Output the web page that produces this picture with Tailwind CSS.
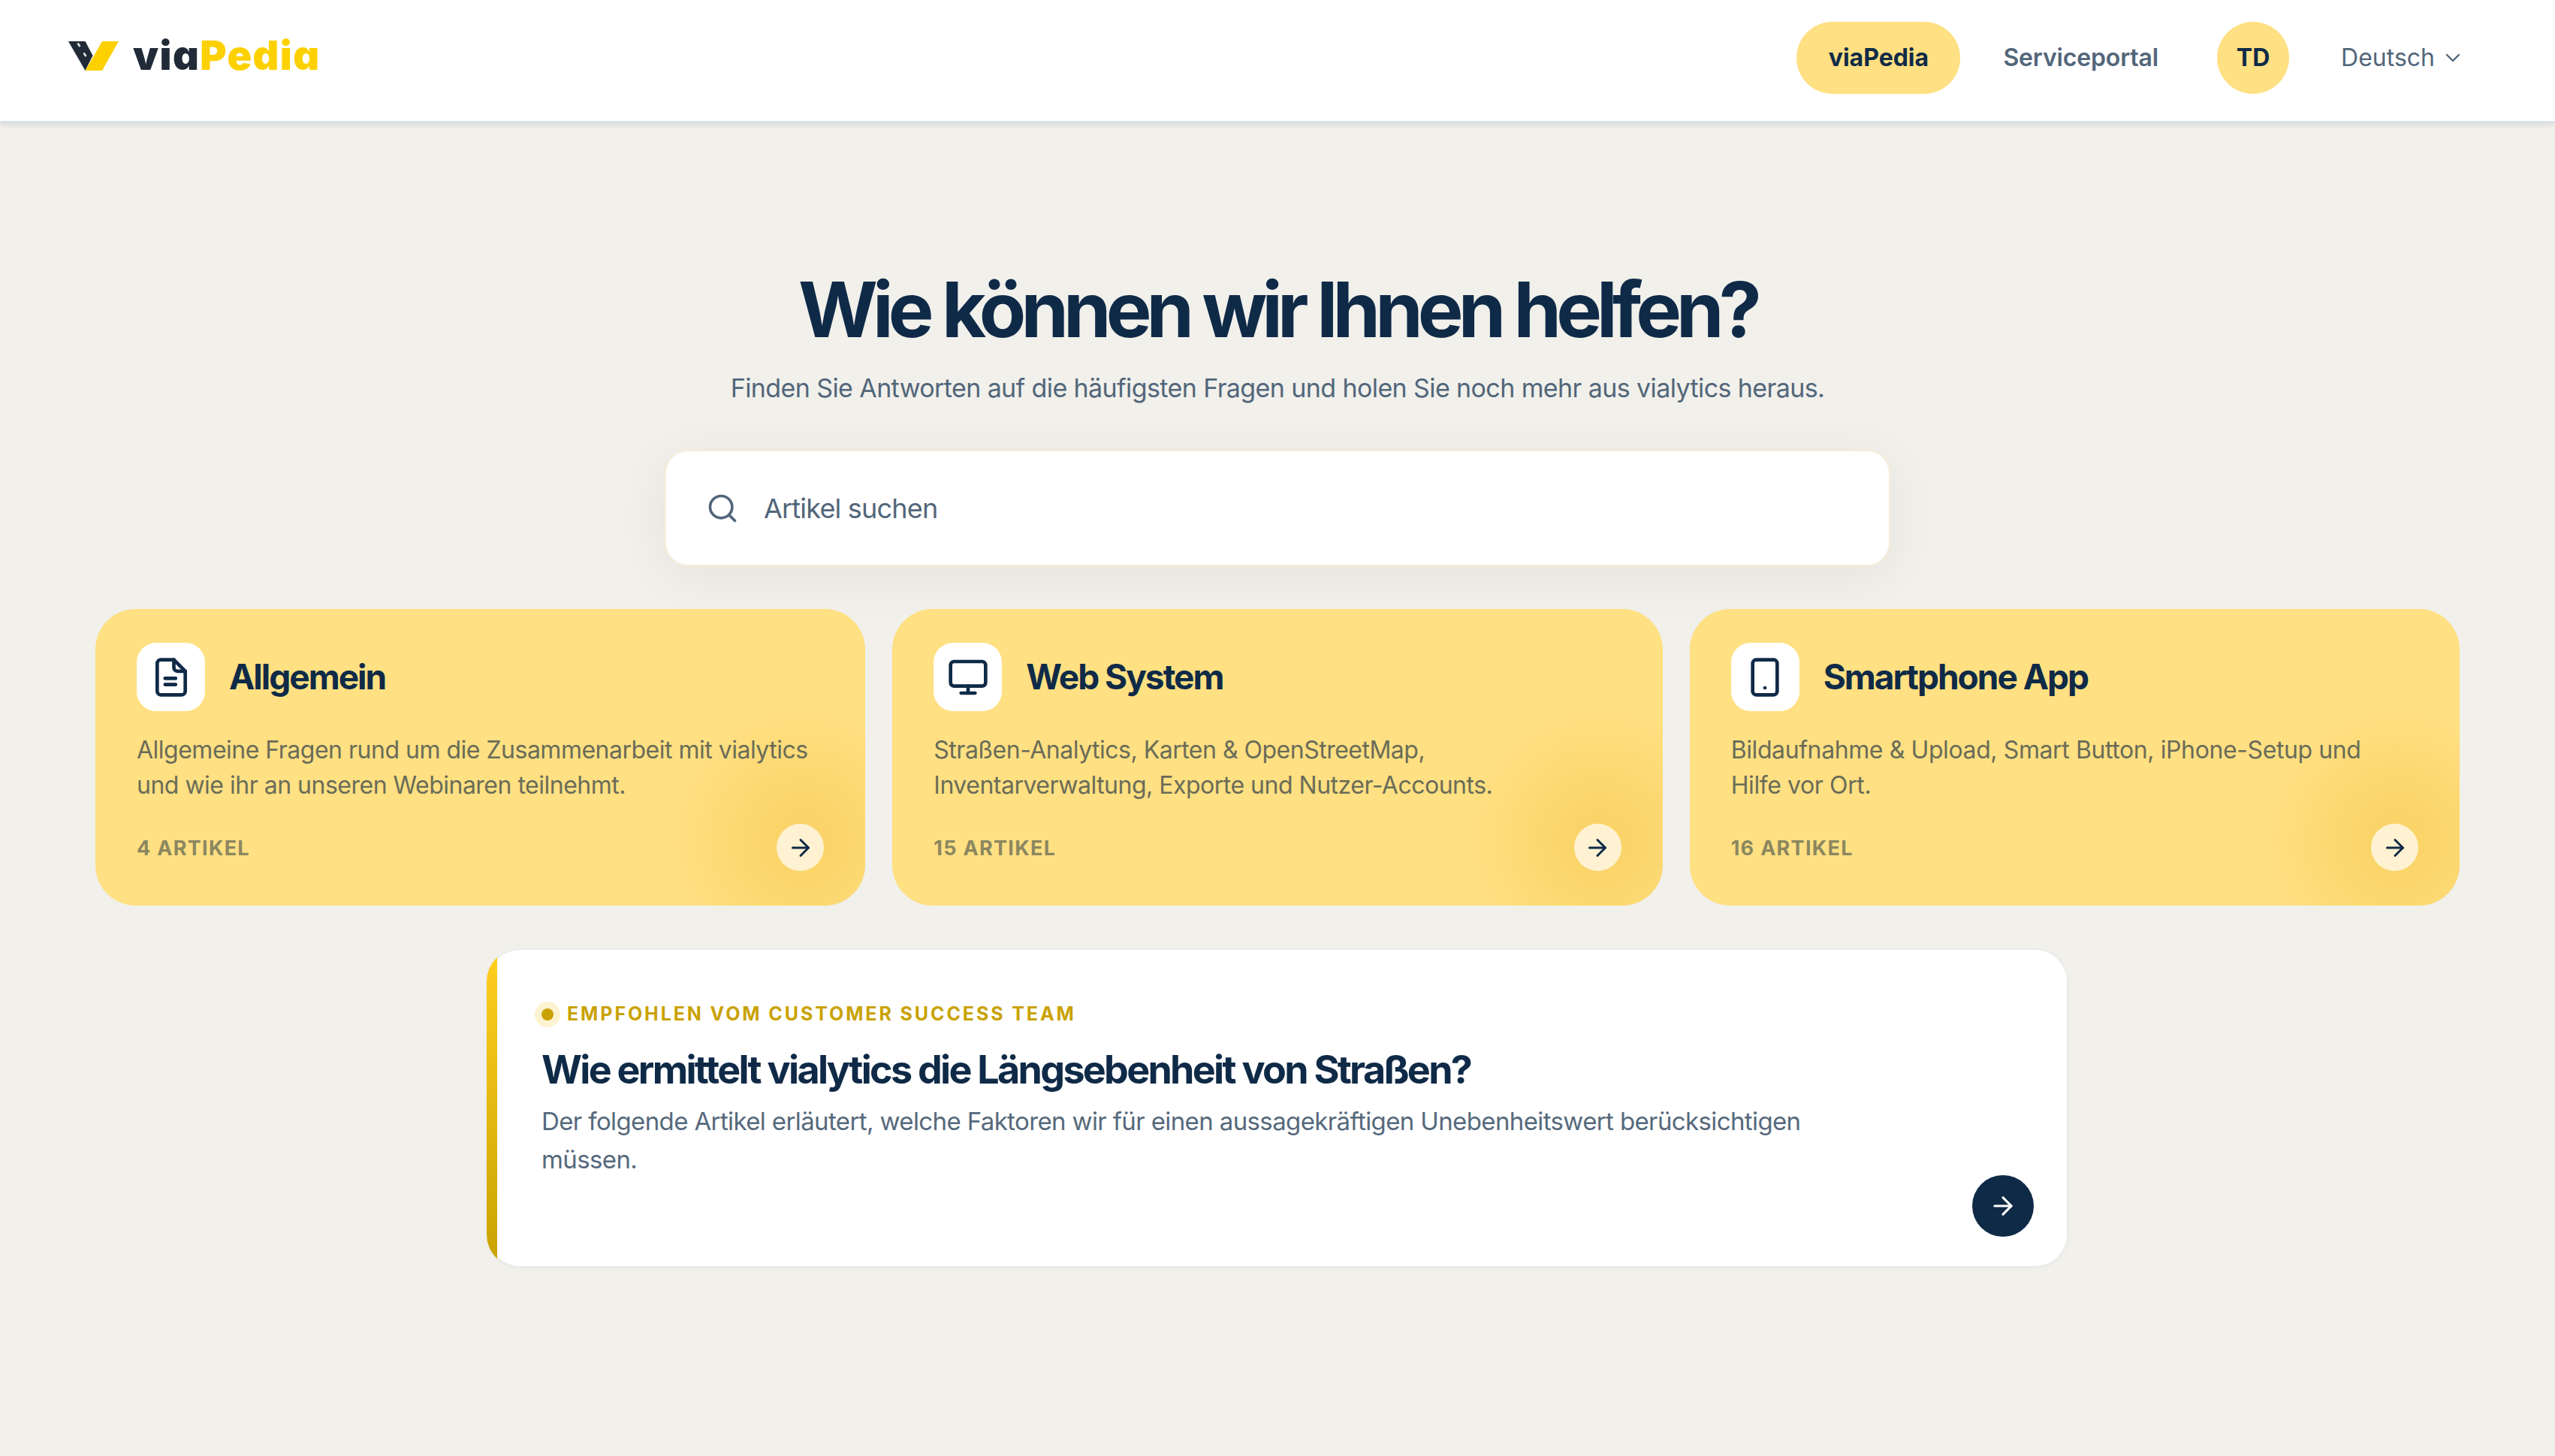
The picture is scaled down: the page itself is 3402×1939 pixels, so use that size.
<!DOCTYPE html>
<html lang="de">
<head>
  <meta charset="UTF-8"/>
  <title>viaPedia</title>
  <script src="https://cdn.jsdelivr.net/npm/@tailwindcss/browser@4"></script>
</head>
<body class="bg-[#f1f0eb] font-['Inter',sans-serif] min-h-screen text-[#0f2a47]">

  <!-- Header -->
  <header class="h-[163px] bg-white border-b-2 border-[#d9e2ee] shadow-[0_4px_6px_rgba(90,100,140,0.14)] pl-[91px] pr-[120px] pb-[7px] flex items-center justify-between relative">
    <div class="flex items-center gap-[19px] -mt-[6px]">
      <svg width="67" height="39" viewBox="0 0 67 39">
        <path d="M0 0H22.5L32.5 19L22.5 39Z" fill="#212b38"/>
        <path d="M12.5 2.5L15.5 7M20.5 15.5L23.5 20" stroke="#e8e8e8" stroke-width="2.5" fill="none"/>
        <path d="M45 0H67L45 39H22.5Z" fill="#fdd100"/>
      </svg>
      <div class="font-black text-[54px] leading-none tracking-[1.4px] [font-feature-settings:'cv11']"><span class="text-[#212b38]">via</span><span class="text-[#fdd100]">Pedia</span></div>
    </div>
    <nav class="flex items-center text-[32px]">
      <a class="h-[96px] w-[218px] rounded-full bg-[#ffe082] flex items-center justify-center font-bold text-[#0f2a47]">viaPedia</a>
      <a class="ml-[57px] font-semibold tracking-[-0.15px] text-[#52667a]">Serviceportal</a>
      <div class="ml-[78px] w-[96px] h-[96px] rounded-full bg-[#ffe082] flex items-center justify-center font-bold text-[#0f2a47]">TD</div>
      <div class="ml-[69px] flex items-center gap-[8px] text-[#52667a]">
        Deutsch
        <svg class="w-[32px] h-[32px]" viewBox="0 0 24 24" fill="none" stroke="currentColor" stroke-width="1.8" stroke-linecap="round" stroke-linejoin="round"><path d="m6 9 6 6 6-6"/></svg>
      </div>
    </nav>
  </header>

  <main class="px-[127px] flex flex-col items-center">
    <h1 class="mt-[189px] text-[102px] leading-[120px] font-bold tracking-[-6.9px] text-[#0f2a47]">Wie können wir Ihnen helfen?</h1>
    <p class="mt-[20px] text-[34px] leading-[50px] tracking-[-0.6px] text-[#52667a]">Finden Sie Antworten auf die häufigsten Fragen und holen Sie noch mehr aus vialytics heraus.</p>

    <!-- Search -->
    <div class="mt-[56px] w-[1634px] h-[157px] bg-white border-[3px] border-[#f4ecdd] rounded-[32px] shadow-[0_12px_70px_rgba(0,0,0,0.06)] flex items-center pl-[53px] gap-[33px]">
      <svg class="w-[44px] h-[44px] text-[#52667a]" viewBox="0 0 24 24" fill="none" stroke="currentColor" stroke-width="2" stroke-linecap="round" stroke-linejoin="round"><circle cx="11" cy="11" r="8"/><path d="m21 21-4.3-4.3"/></svg>
      <span class="text-[36px] tracking-[-0.8px] text-[#52667a]">Artikel suchen</span>
    </div>

    <!-- Kategorien -->
    <div class="mt-[56px] w-full grid grid-cols-3 gap-[36px]">
      <a class="h-[395px] rounded-[54px] bg-[#ffe082] bg-[radial-gradient(circle_180px_at_92%_78%,#fbd469_0%,#fbd469_20%,#ffe08200_100%)] pt-[45px] pb-[46px] px-[55px] flex flex-col">
        <div class="flex items-center gap-[32px]">
          <div class="w-[91px] h-[91px] bg-white rounded-[26px] flex items-center justify-center">
            <svg class="w-[56px] h-[56px]" viewBox="0 0 24 24" fill="none" stroke="#0f2a47" stroke-width="2" stroke-linecap="round" stroke-linejoin="round"><path d="M13.5 2H6a2 2 0 0 0-2 2v16a2 2 0 0 0 2 2h12a2 2 0 0 0 2-2V8.5Z"/><path d="M13.5 2v4.5a2 2 0 0 0 2 2H20"/><path d="M8.5 12.6h6"/><path d="M8.5 16.1h6"/></svg>
          </div>
          <h2 class="text-[46px] font-bold tracking-[-2px]">Allgemein</h2>
        </div>
        <p class="mt-[28px] text-[32px] leading-[47px] tracking-[-0.5px] text-[#6a6c58]">Allgemeine Fragen rund um die Zusammenarbeit mit vialytics und wie ihr an unseren Webinaren teilnehmt.</p>
        <div class="mt-auto flex items-center justify-between">
          <span class="pt-[3px] text-[27px] font-bold tracking-[1.3px] text-[#8b8760]">4 ARTIKEL</span>
          <span class="w-[63px] h-[63px] rounded-full bg-[#fef2d2] flex items-center justify-center">
            <svg class="w-[36px] h-[36px]" viewBox="0 0 24 24" fill="none" stroke="#0f2a47" stroke-width="2" stroke-linecap="round" stroke-linejoin="round"><path d="M5 12h14"/><path d="m12 5 7 7-7 7"/></svg>
          </span>
        </div>
      </a>
      <a class="h-[395px] rounded-[54px] bg-[#ffe082] bg-[radial-gradient(circle_180px_at_92%_78%,#fbd469_0%,#fbd469_20%,#ffe08200_100%)] pt-[45px] pb-[46px] px-[55px] flex flex-col">
        <div class="flex items-center gap-[32px]">
          <div class="w-[91px] h-[91px] bg-white rounded-[26px] flex items-center justify-center">
            <svg class="w-[56px] h-[56px]" viewBox="0 0 24 24" fill="none" stroke="#0f2a47" stroke-width="2" stroke-linecap="round" stroke-linejoin="round"><rect x="2" y="3" width="20" height="14" rx="2"/><path d="M8 21h8"/><path d="M12 17v4"/></svg>
          </div>
          <h2 class="text-[46px] font-bold tracking-[-2px]">Web System</h2>
        </div>
        <p class="mt-[28px] text-[32px] leading-[47px] tracking-[-0.5px] text-[#6a6c58]">Straßen-Analytics, Karten &amp; OpenStreetMap,<br>Inventarverwaltung, Exporte und Nutzer-Accounts.</p>
        <div class="mt-auto flex items-center justify-between">
          <span class="pt-[3px] text-[27px] font-bold tracking-[1.3px] text-[#8b8760]">15 ARTIKEL</span>
          <span class="w-[63px] h-[63px] rounded-full bg-[#fef2d2] flex items-center justify-center">
            <svg class="w-[36px] h-[36px]" viewBox="0 0 24 24" fill="none" stroke="#0f2a47" stroke-width="2" stroke-linecap="round" stroke-linejoin="round"><path d="M5 12h14"/><path d="m12 5 7 7-7 7"/></svg>
          </span>
        </div>
      </a>
      <a class="h-[395px] rounded-[54px] bg-[#ffe082] bg-[radial-gradient(circle_180px_at_92%_78%,#fbd469_0%,#fbd469_20%,#ffe08200_100%)] pt-[45px] pb-[46px] px-[55px] flex flex-col">
        <div class="flex items-center gap-[32px]">
          <div class="w-[91px] h-[91px] bg-white rounded-[26px] flex items-center justify-center">
            <svg class="w-[56px] h-[56px]" viewBox="0 0 24 24" fill="none" stroke="#0f2a47" stroke-width="2" stroke-linecap="round" stroke-linejoin="round"><rect x="5" y="2" width="14" height="20" rx="2"/><path d="M12 18h.01"/></svg>
          </div>
          <h2 class="text-[46px] font-bold tracking-[-2px]">Smartphone App</h2>
        </div>
        <p class="mt-[28px] text-[32px] leading-[47px] tracking-[-0.4px] text-[#6a6c58]">Bildaufnahme &amp; Upload, Smart Button, iPhone-Setup und<br>Hilfe vor Ort.</p>
        <div class="mt-auto flex items-center justify-between">
          <span class="pt-[3px] text-[27px] font-bold tracking-[1.3px] text-[#8b8760]">16 ARTIKEL</span>
          <span class="w-[63px] h-[63px] rounded-full bg-[#fef2d2] flex items-center justify-center">
            <svg class="w-[36px] h-[36px]" viewBox="0 0 24 24" fill="none" stroke="#0f2a47" stroke-width="2" stroke-linecap="round" stroke-linejoin="round"><path d="M5 12h14"/><path d="m12 5 7 7-7 7"/></svg>
          </span>
        </div>
      </a>
    </div>

    <!-- Empfohlen -->
    <div class="relative overflow-hidden mt-[57px] w-[2106px] h-[425px] bg-white rounded-[44px] shadow-[inset_0_0_0_2px_#ebebe8,0_1px_3px_rgba(0,0,0,0.05)] pl-[73px] pt-[69px] pr-[44px]">
      <div class="absolute left-0 top-0 bottom-0 w-[14px] bg-gradient-to-b from-[#ffcf1f] to-[#c9a200]"></div>
      <div class="-ml-[9px] flex items-center gap-[9px]">
        <span class="w-[34px] h-[34px] rounded-full bg-[#fef3d0] flex items-center justify-center"><span class="w-[16px] h-[16px] rounded-full bg-[#c9a200]"></span></span>
        <span class="text-[25px] font-bold tracking-[2.9px] text-[#c9a200]">EMPFOHLEN VOM CUSTOMER SUCCESS TEAM</span>
      </div>
      <h3 class="mt-[24px] text-[52px] leading-[62px] font-bold tracking-[-2.7px]">Wie ermittelt vialytics die Längsebenheit von Straßen?</h3>
      <p class="mt-[12px] max-w-[1700px] text-[33px] leading-[51px] tracking-[-0.62px] text-[#56697c]">Der folgende Artikel erläutert, welche Faktoren wir für einen aussagekräftigen Unebenheitswert berücksichtigen müssen.</p>
      <div class="absolute right-[46px] bottom-[41px] w-[82px] h-[82px] rounded-full bg-[#0f2a47] flex items-center justify-center">
        <svg class="w-[38px] h-[38px]" viewBox="0 0 24 24" fill="none" stroke="#fff" stroke-width="2" stroke-linecap="round" stroke-linejoin="round"><path d="M5 12h14"/><path d="m12 5 7 7-7 7"/></svg>
      </div>
    </div>
  </main>
</body>
</html>
